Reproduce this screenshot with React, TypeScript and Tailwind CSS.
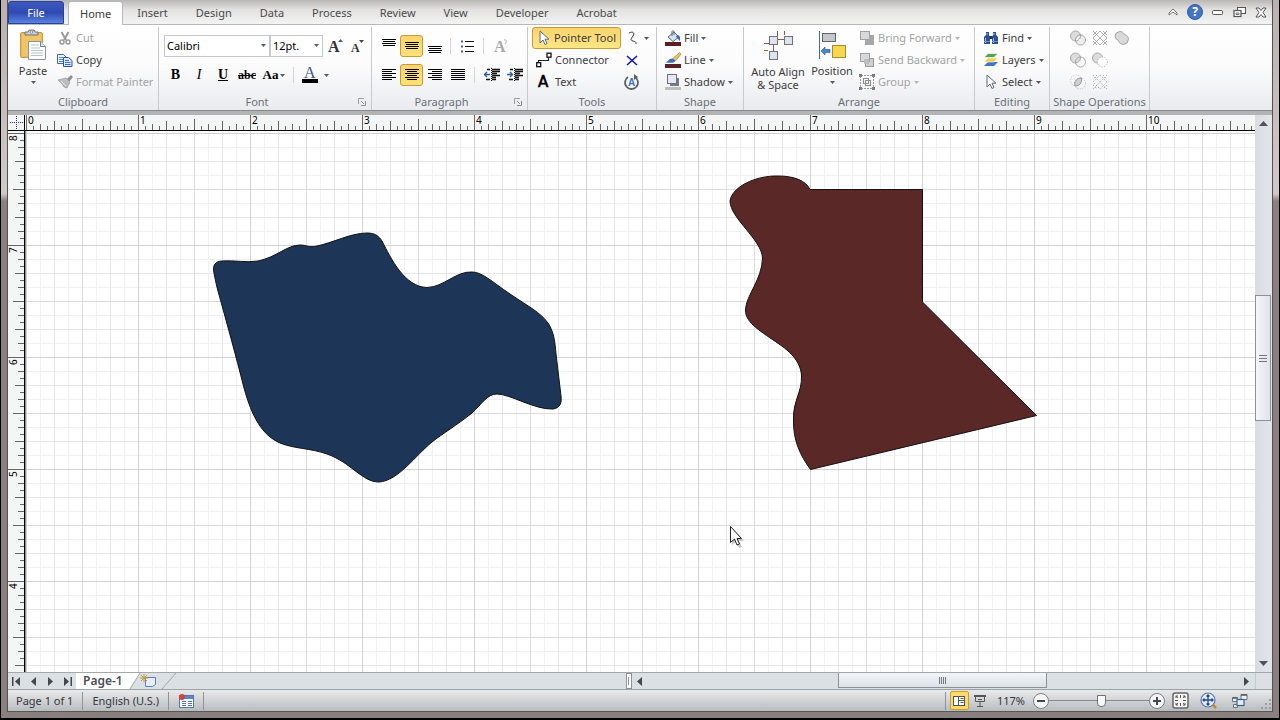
import type { ReactNode } from 'react'

type IconProps = { w?: number; h?: number; className?: string; children: ReactNode }

function Icon({ w = 16, h = 16, className = '', children }: IconProps) {
  return (
    <svg width={w} height={h} viewBox={`0 0 ${w} ${h}`} fill="none" className={`shrink-0 overflow-visible ${className}`} aria-hidden="true">
      {children}
    </svg>
  )
}

function Caret({ className = 'text-[#555b62]' }: { className?: string }) {
  return (
    <Icon w={5} h={3} className={className}>
      <path d="M0 0h5L2.5 3z" fill="currentColor" />
    </Icon>
  )
}

function Separator() {
  return <div className="h-[16px] w-px bg-[#d3d5d8]" />
}

type GroupProps = { title: string; launcher?: boolean; className?: string; children: ReactNode }

function Group({ title, launcher, className = '', children }: GroupProps) {
  return (
    <section aria-label={title} className={`flex shrink-0 flex-col border-r border-[#c6cacf] ${className}`}>
      <div className="h-[66px]">{children}</div>
      <div className="flex h-[17px] items-center">
        <span className="flex-1 text-center whitespace-nowrap text-[#6a6f76]">{title}</span>
        {launcher && (
          <button aria-label={`${title} settings`} className="mr-[2px] flex w-[14px] justify-center">
            <Icon w={8} h={8}>
              <path d="M.5 6V.5H6" stroke="#9a9ea3" />
              <path d="M3 3l3 3M7.5 3v4.5H3" stroke="#8a8e93" />
            </Icon>
          </button>
        )}
      </div>
    </section>
  )
}

type ToolButtonProps = { icon: ReactNode; label: string; caret?: boolean; disabled?: boolean }

function ToolButton({ icon, label, caret, disabled }: ToolButtonProps) {
  return (
    <button disabled={disabled} className="flex h-[22px] items-center gap-[3px] whitespace-nowrap text-[#3b3b3b] disabled:text-[#a3a3a3]">
      <span className="flex w-[17px] justify-center">{icon}</span>
      <span>{label}</span>
      {caret && <Caret className={disabled ? 'text-[#b5b5b5]' : 'text-[#555b62]'} />}
    </button>
  )
}

function IconButton({ label, active, children }: { label: string; active?: boolean; children: ReactNode }) {
  return (
    <button
      aria-label={label}
      className={`flex h-[22px] w-[23px] items-center justify-center ${active ? 'rounded-[3px] border border-[#c79a3a] bg-linear-to-b from-[#fbd36d] to-[#fee278]' : ''}`}
    >
      {children}
    </button>
  )
}

/* ---------- icons ---------- */

function PasteIcon() {
  return (
    <Icon w={28} h={32}>
      <rect x="1.5" y="3.5" width="22" height="25" rx="1.5" fill="#eab956" stroke="#c99a45" />
      <path d="M3 5h19v22H3z" fill="#f0c566" />
      <path d="M6 3h3l1-2h5l1 2h3v3H6z" fill="#c9ccd0" stroke="#6f757b" />
      <circle cx="12.5" cy="3" r="1.2" fill="#fff" stroke="#6f757b" strokeWidth=".7" />
      <path d="M9.5 12.5h12l5 5v13h-17z" fill="#fff" stroke="#8b97a8" />
      <path d="M21.5 12.5v5h5" fill="#dbe4f0" stroke="#6d7f9b" />
      <path d="M12 16h8M12 19h9M12 21.5h12M12 24h12M12 26.5h12" stroke="#b7c0cf" />
    </Icon>
  )
}

function CutIcon() {
  return (
    <Icon>
      <path d="M4.5 2l4.5 8M11.5 2L7 10" stroke="#9a9a9a" strokeWidth="2" />
      <circle cx="5" cy="12" r="2" stroke="#9a9a9a" strokeWidth="1.5" />
      <circle cx="11" cy="12" r="2" stroke="#9a9a9a" strokeWidth="1.5" />
    </Icon>
  )
}

function CopyIcon() {
  return (
    <Icon>
      <path d="M.5 2.5h6l3 3v6h-9z" fill="#e8f0fb" stroke="#3d68ae" />
      <path d="M2 5.5h4M2 7.5h4M2 9.5h4" stroke="#5c86c8" />
      <path d="M6.5 5.5h5l3.5 3v6H6.5z" fill="#dbe8fa" stroke="#2c55a0" />
      <path d="M8 8.5h4M8 10.5h5.5M8 12.5h5.5" stroke="#4370bd" />
    </Icon>
  )
}

function PainterIcon() {
  return (
    <Icon>
      <path d="M10 5l4-4 2 2-4 5z" fill="#8f8f8f" />
      <path d="M1 6l8-2 4 4-3 6-3-1-2-3z" fill="#bdbdbd" stroke="#999" strokeWidth=".7" />
      <path d="M4 7l5 5" stroke="#e6e6e6" />
    </Icon>
  )
}

function ArrowCursor() {
  return (
    <Icon w={12} h={16}>
      <path d="M2 1v12l3-3 2 4.5 2-1-2-4.3h4z" fill="#fff" stroke="#5a6b8c" />
    </Icon>
  )
}

function ConnectorIcon() {
  return (
    <Icon>
      <path d="M2.5 10V8.5h10V6" stroke="#222" strokeWidth="1.2" />
      <rect x=".7" y="10.7" width="4" height="4" fill="#fff" stroke="#111" strokeWidth="1.3" />
      <rect x="11" y="1.2" width="4" height="4" fill="#fff" stroke="#111" strokeWidth="1.3" />
    </Icon>
  )
}

function LinesIcon({ rows }: { rows: [number, number, number][] }) {
  return (
    <Icon>
      {rows.map(([y, x1, x2]) => (
        <path key={y} d={`M${x1} ${y + 0.5}H${x2}`} stroke="#000" />
      ))}
    </Icon>
  )
}

function BulletsIcon() {
  return (
    <Icon>
      <path d="M6 3.5h9M6 8.5h9M6 13.5h9" stroke="#111" />
      <path d="M2 3.5h2M2 8.5h2M2 13.5h2" stroke="#4a5aa0" strokeWidth="2" />
    </Icon>
  )
}

function IndentIcon({ increase }: { increase?: boolean }) {
  return (
    <Icon>
      <path d="M8 2.5h8M8 4.5h8M8 6.5h5M8 8.5h8M8 10.5h4M3 2.5h3M2 12.5h4M8 12.5h4" stroke="#111" strokeWidth="1.3" />
      <path d="M7.5 1v14" stroke="#111" strokeDasharray="1 1" />
      <path d={increase ? 'M0 7.5h5M3 5l2.5 2.5L3 10' : 'M6 7.5H1M3 5L.5 7.5 3 10'} stroke="#2e5f9e" strokeWidth="1.4" />
    </Icon>
  )
}

function FillIcon() {
  return (
    <Icon>
      <path d="M3 7l6-5 5 5-6 4.5z" fill="#d7e2ef" stroke="#5a6b80" />
      <path d="M7 6V1.500c0-1 2-1 2 0V5" stroke="#5a6b80" />
      <path d="M12 5c3 0 3.500 3 3 6-1.500-1-2-3-4-4z" fill="#3569b8" />
      <path d="M0 12h16v4H0z" fill="#5b1f21" />
    </Icon>
  )
}

function LineIcon() {
  return (
    <Icon>
      <path d="M8 6.5L14.5.5 16 2l-5.500 7z" fill="#eac25a" stroke="#a8843a" strokeWidth=".7" />
      <path d="M0 10c4 0 3-4 8-3.500L10.500 9C9 11 5 11.500 0 10z" fill="#3c6fc0" />
      <path d="M0 12h16v4H0z" fill="#5b1f21" />
    </Icon>
  )
}

function ShadowIcon() {
  return (
    <Icon>
      <path d="M5 4h9v8H5z" fill="#777a85" />
      <rect x="2.5" y=".5" width="9" height="9" fill="#e6e8f4" stroke="#6b6f82" />
      <path d="M0 13h16v3H0z" fill="#bdbdbd" />
    </Icon>
  )
}

function Box({ x, y }: { x: number; y: number }) {
  return <rect x={x + 0.5} y={y + 0.5} width="8" height="8" fill="#dfe3ef" stroke="#6b7280" />
}

function AutoAlignIcon() {
  return (
    <Icon w={30} h={32}>
      <path d="M14.500 2v5M21.500 2v4M1 14.500h6M1 21.500h4M10.500 14v8M14 10.500h7" stroke="#a8553e" />
      <Box x={6} y={7} />
      <Box x={21} y={7} />
      <Box x={6} y={22} />
    </Icon>
  )
}

function PositionIcon() {
  return (
    <Icon w={30} h={32}>
      <path d="M2.5 2v28" stroke="#3b6aa8" />
      <rect x="5.5" y="4.5" width="13" height="8" fill="#c4c7cc" stroke="#5f646b" />
      <rect x="15.5" y="16.5" width="13" height="12" fill="#f8d64e" stroke="#a88a2a" />
      <path d="M13 20.5H8v-2.500l-4 4 4 4v-2.500h5z" fill="#4a86cf" stroke="#2f62a8" strokeWidth=".7" />
    </Icon>
  )
}

function StackIcon({ back }: { back?: boolean }) {
  return (
    <Icon>
      {back && <rect x="6.5" y="6.5" width="8" height="8" fill="#cfcfcf" stroke="#9b9b9b" />}
      <rect x="1.5" y="1.5" width="9" height="8" fill="#d8d8d8" stroke="#a0a0a0" />
      {back && <path d="M5 7h5v5H5z" fill="#bdbdbd" />}
      {!back && <path d="M10 5h5v10H6v-5h4z" fill="#a7a7a7" />}
    </Icon>
  )
}

function GroupIcon() {
  return (
    <Icon>
      <path d="M2 1.500h12M2 14.500h12M1.500 2v12M14.500 2v12" stroke="#9a9a9a" strokeDasharray="2 1" />
      <rect x="4.5" y="4.5" width="5" height="5" stroke="#8c8c8c" />
      <rect x="6.5" y="6.5" width="5" height="5" stroke="#8c8c8c" />
      <path d="M0 0h3v3H0zM13 0h3v3h-3zM0 13h3v3H0zM13 13h3v3h-3z" fill="#7d7d7d" />
    </Icon>
  )
}

function FindIcon() {
  return (
    <Icon>
      <path d="M3 2h3v3l1 2v7H1V7l2-2zM10 2h3v3l2 2v7H9V7l1-2z" fill="#2f4f95" />
      <path d="M6.5 6h3v3h-3z" fill="#1d3263" />
      <path d="M2.5 8v5M10.5 8v5M4 3v2M11 3v2" stroke="#a9bfe6" />
      <path d="M1 11.500h6M9 11.500h6" stroke="#6f8dcb" />
    </Icon>
  )
}

function LayersIcon() {
  return (
    <Icon>
      <path d="M5 10h10l-4 4H1z" fill="#3f74c9" />
      <path d="M5 6h10l-4 4H1z" fill="#f1cf52" stroke="#fff" strokeWidth=".6" />
      <path d="M5 1.500h10l-4 4H1z" fill="#55a553" stroke="#fff" strokeWidth=".6" />
    </Icon>
  )
}

function TwoCircles({ front, lens, dashed }: { front?: string; lens?: boolean; dashed?: boolean }) {
  return (
    <Icon>
      <circle cx="5.5" cy="6" r="5" fill="#dcdcdc" stroke="#a9a9a9" />
      <circle cx="10.5" cy="10" r="5" fill={front} stroke="#a9a9a9" strokeDasharray={dashed ? '1 1.500' : undefined} />
      {lens && <path d="M5.5 11c-.5-3 2-6 5-6 .5 3-2 6-5 6z" fill="#f2f2f2" stroke="#a0a0a0" />}
    </Icon>
  )
}

function UnionIcon() {
  return (
    <Icon>
      <path d="M1 6a5 5 0 019.500-1.500 5 5 0 11-6 6A5 5 0 011 6z" fill="#d9d9d9" stroke="#a4a4a4" />
    </Icon>
  )
}

function IntersectIcon() {
  return (
    <Icon>
      <circle cx="6" cy="6.5" r="5.5" stroke="#b5b5b5" strokeDasharray="1 1.500" />
      <circle cx="10" cy="9.5" r="5.5" stroke="#b5b5b5" strokeDasharray="1 1.500" />
      <path d="M5 12c-1-5 2-8 6.500-8 .5 5-2 8-6.500 8z" fill="#d0d0d0" stroke="#999" />
    </Icon>
  )
}

function TrimIcon({ dashed }: { dashed?: boolean }) {
  return (
    <Icon>
      <path
        d="M1 1l14 14M15 1L1 15M8 1l7 7-7 7-7-7zM5 1L1 5M11 1l4 4M1 11l4 4M15 11l-4 4"
        stroke="#9a9a9a"
        strokeWidth=".8"
        strokeDasharray={dashed ? '1.5 1.5' : undefined}
      />
    </Icon>
  )
}

/* ---------- title strip ---------- */

const tabs = ['Insert', 'Design', 'Data', 'Process', 'Review', 'View', 'Developer', 'Acrobat']

function TabStrip() {
  return (
    <header className="flex h-[25px] shrink-0 items-end border-b border-[#b5b9be] bg-linear-to-b from-[#b9b7b6] via-[#e3e2e1] via-40% to-[#f3f3f3]">
      <button className="mr-1 h-[23px] w-[56px] rounded-t-[3px] border border-[#2c3f99] bg-linear-to-b from-[#3e5abf] via-[#2f49b0] to-[#5a82e0] text-white">
        File
      </button>
      <nav className="flex">
        <button className="-mb-px h-[24px] rounded-t-[3px] border border-b-0 border-[#b5b9be] bg-white px-[11px] text-[#3b3b3b]">Home</button>
        {tabs.map((tab) => (
          <button key={tab} className="h-[23px] px-[14px] text-[#4a4a4a]">
            {tab}
          </button>
        ))}
      </nav>
      <div className="ml-auto flex h-[24px] items-center">
        <button aria-label="Minimize the ribbon" className="flex w-[22px] justify-center">
          <Icon w={10} h={8}>
            <path d="M1 5l4-4 4 4v2L5 4 1 7z" fill="#fff" stroke="#666" strokeWidth=".9" />
          </Icon>
        </button>
        <button aria-label="Help" className="flex w-[22px] justify-center">
          <span className="flex size-[16px] items-center justify-center rounded-full border border-[#2f5aa5] bg-[#4674c4] text-[12px] leading-[14px] font-bold text-white">
            ?
          </span>
        </button>
        <button aria-label="Minimize" className="flex w-[22px] justify-center">
          <Icon w={11} h={5}>
            <rect x=".5" y=".5" width="10" height="4" rx="1" fill="#fff" stroke="#555" />
          </Icon>
        </button>
        <button aria-label="Restore" className="flex w-[22px] justify-center">
          <Icon w={13} h={12}>
            <rect x="4.5" y="1.5" width="8" height="6" fill="#fff" stroke="#555" />
            <rect x="1" y="4.5" width="7" height="6" fill="#fff" stroke="#555" strokeWidth="1.2" />
            <path d="M3 7h3v1.500H3z" fill="#fff" stroke="#555" strokeWidth=".8" />
          </Icon>
        </button>
        <button aria-label="Close" className="flex w-[22px] justify-center">
          <Icon w={12} h={11}>
            <path d="M1 1h3l2 2.5L8 1h3L8 5.5 11 10H8L6 7.5 4 10H1l3-4.500z" fill="#fff" stroke="#555" />
          </Icon>
        </button>
      </div>
    </header>
  )
}

/* ---------- ribbon ---------- */

const alignTop: [number, number, number][] = [[1, 1, 15], [3, 2, 14], [5, 1, 15], [7, 2, 14]]
const alignMiddle: [number, number, number][] = [[4, 1, 15], [6, 2, 14], [8, 1, 15], [10, 2, 14]]
const alignBottom: [number, number, number][] = [[8, 1, 15], [10, 2, 14], [12, 1, 15], [14, 2, 14]]
const alignLeft: [number, number, number][] = [[2, 1, 15], [4, 1, 11], [6, 1, 15], [8, 1, 11], [10, 1, 15], [12, 1, 11]]
const alignCenter: [number, number, number][] = [[2, 1, 15], [4, 3, 13], [6, 1, 15], [8, 3, 13], [10, 1, 15], [12, 3, 13]]
const alignRight: [number, number, number][] = [[2, 1, 15], [4, 5, 15], [6, 1, 15], [8, 5, 15], [10, 1, 15], [12, 5, 15]]
const justify: [number, number, number][] = [[2, 1, 15], [4, 1, 15], [6, 1, 15], [8, 1, 15], [10, 1, 15], [12, 1, 15]]

function Combo({ label, value, className }: { label: string; value: string; className: string }) {
  return (
    <div className={`relative h-[22px] ${className}`}>
      <select aria-label={label} className="size-full appearance-none border border-[#c5c9ce] bg-white pl-[2px] text-black">
        <option>{value}</option>
      </select>
      <span className="pointer-events-none absolute top-[9px] right-[4px]">
        <Caret />
      </span>
    </div>
  )
}

function Ribbon() {
  return (
    <div className="flex h-[86px] shrink-0 overflow-hidden border-b border-[#85898e] bg-linear-to-b from-white via-[#fbfbfc] via-50% to-[#e9ebee] pt-[2px]">
      <Group title="Clipboard" className="w-[151px]">
        <div className="flex pl-[8px]">
          <button className="flex w-[34px] flex-col items-center pt-[2px] text-[#3b3b3b]">
            <PasteIcon />
            <span className="leading-[20px]">Paste</span>
            <Caret />
          </button>
          <div className="ml-[6px]">
            <ToolButton icon={<CutIcon />} label="Cut" disabled />
            <ToolButton icon={<CopyIcon />} label="Copy" />
            <ToolButton icon={<PainterIcon />} label="Format Painter" disabled />
          </div>
        </div>
      </Group>

      <Group title="Font" launcher className="w-[213px]">
        <div className="flex flex-col gap-[7px] pt-[8px] pl-[5px]">
          <div className="flex items-center">
            <Combo label="Font" value="Calibri" className="w-[106px]" />
            <Combo label="Font size" value="12pt." className="w-[53px]" />
            <IconButton label="Grow font">
              <Icon>
                <text x="1" y="14" className="font-['Liberation_Serif'] text-[16px] font-bold" fill="#333">A</text>
                <path d="M11 4h5l-2.500-3z" fill="#4a5aa0" />
              </Icon>
            </IconButton>
            <IconButton label="Shrink font">
              <Icon>
                <text x="1" y="14" className="font-['Liberation_Serif'] text-[12px] font-bold" fill="#333">A</text>
                <path d="M9 2h5l-2.500 3z" fill="#444" />
              </Icon>
            </IconButton>
          </div>
          <div className="flex h-[22px] items-center font-['Liberation_Serif'] text-[14px] text-black">
            <button className="w-[23px] font-bold">B</button>
            <button className="w-[24px] italic">I</button>
            <button className="w-[24px] font-bold underline">U</button>
            <button className="w-[24px] text-[12px] font-bold line-through">abc</button>
            <button className="flex w-[30px] items-center justify-center gap-[2px] text-[13px] font-bold">
              Aa <Caret />
            </button>
            <div className="mx-[4px]">
              <Separator />
            </div>
            <button aria-label="Font color" className="flex w-[34px] items-center justify-center gap-[6px]">
              <Icon>
                <text x="2" y="11" className="font-['Liberation_Serif'] text-[16px]" fill="#3b5182">A</text>
                <path d="M0 12h16v4H0z" fill="#000" />
              </Icon>
              <Caret />
            </button>
          </div>
        </div>
      </Group>

      <Group title="Paragraph" launcher className="w-[156px]">
        <div className="flex flex-col gap-[7px] pt-[8px] pl-[5px]">
          <div className="flex items-center">
            <IconButton label="Align top"><LinesIcon rows={alignTop} /></IconButton>
            <IconButton label="Align middle" active><LinesIcon rows={alignMiddle} /></IconButton>
            <IconButton label="Align bottom"><LinesIcon rows={alignBottom} /></IconButton>
            <div className="mx-[4px]"><Separator /></div>
            <IconButton label="Bullets"><BulletsIcon /></IconButton>
            <div className="mx-[5px]"><Separator /></div>
            <IconButton label="Rotate text">
              <Icon>
                <text x="1" y="14" className="font-['Liberation_Serif'] text-[16px] font-bold" fill="#aaa">A</text>
                <path d="M11 2c3-1 3 2 1 4" stroke="#b5b5b5" />
              </Icon>
            </IconButton>
          </div>
          <div className="flex items-center">
            <IconButton label="Align left"><LinesIcon rows={alignLeft} /></IconButton>
            <IconButton label="Center" active><LinesIcon rows={alignCenter} /></IconButton>
            <IconButton label="Align right"><LinesIcon rows={alignRight} /></IconButton>
            <IconButton label="Justify"><LinesIcon rows={justify} /></IconButton>
            <div className="mx-[5px]"><Separator /></div>
            <IconButton label="Decrease indent"><IndentIcon /></IconButton>
            <IconButton label="Increase indent"><IndentIcon increase /></IconButton>
          </div>
        </div>
      </Group>

      <Group title="Tools" className="w-[129px]">
        <div className="flex pl-[4px]">
          <div className="w-[89px]">
            <button className="flex h-[22px] w-full items-center gap-[2px] rounded-[3px] border border-[#c79a3a] bg-linear-to-b from-[#fbd36d] to-[#fee685] pl-[2px] whitespace-nowrap text-[#3b3b3b]">
              <span className="flex w-[17px] justify-center"><ArrowCursor /></span>
              Pointer Tool
            </button>
            <div className="pl-[3px]">
              <ToolButton icon={<ConnectorIcon />} label="Connector" />
              <ToolButton
                icon={
                  <Icon>
                    <text x="2" y="13" className="font-['DejaVu_Sans'] text-[15px]" fill="#000" stroke="#000" strokeWidth=".6">A</text>
                  </Icon>
                }
                label="Text"
              />
            </div>
          </div>
          <div className="ml-[3px] flex flex-col">
            <button aria-label="Freeform" className="flex h-[22px] items-center gap-[4px]">
              <Icon>
                <path d="M5 3c4-2 6 0 4 3s-3 4 0 5 3 1 3 3" stroke="#333" />
              </Icon>
              <Caret />
            </button>
            <button aria-label="Connection point" className="flex h-[22px] items-center">
              <Icon>
                <path d="M3 4l10 9M13 4L3 13" stroke="#1414c8" strokeWidth="1.6" />
              </Icon>
            </button>
            <button aria-label="Text block" className="flex h-[22px] items-center">
              <Icon>
                <path d="M4 3a6.500 6.500 0 107 0" stroke="#5a6068" strokeWidth="1.8" />
                <path d="M10 0l4 3-4 3z" fill="#5a6068" />
                <text x="4" y="12" className="font-['Liberation_Sans'] text-[10px] font-bold" fill="#3f71b5">A</text>
              </Icon>
            </button>
          </div>
        </div>
      </Group>

      <Group title="Shape" className="w-[87px]">
        <div className="pl-[7px]">
          <ToolButton icon={<FillIcon />} label="Fill" caret />
          <ToolButton icon={<LineIcon />} label="Line" caret />
          <ToolButton icon={<ShadowIcon />} label="Shadow" caret />
        </div>
      </Group>

      <Group title="Arrange" className="w-[231px]">
        <div className="flex pl-[4px] text-[#3b3b3b]">
          <button className="flex w-[60px] flex-col items-center pt-[2px] leading-[13px] whitespace-nowrap">
            <AutoAlignIcon />
            <span className="pt-[4px]">Auto Align</span>
            <span>&amp; Space</span>
          </button>
          <button className="flex w-[48px] flex-col items-center pt-[2px]">
            <PositionIcon />
            <span className="leading-[20px]">Position</span>
            <Caret />
          </button>
          <div className="ml-[2px]">
            <ToolButton icon={<StackIcon />} label="Bring Forward" caret disabled />
            <ToolButton icon={<StackIcon back />} label="Send Backward" caret disabled />
            <ToolButton icon={<GroupIcon />} label="Group" caret disabled />
          </div>
        </div>
      </Group>

      <Group title="Editing" className="w-[75px]">
        <div className="pl-[7px]">
          <ToolButton icon={<FindIcon />} label="Find" caret />
          <ToolButton icon={<LayersIcon />} label="Layers" caret />
          <ToolButton icon={<ArrowCursor />} label="Select" caret />
        </div>
      </Group>

      <Group title="Shape Operations" className="w-[100px]">
        <div className="grid grid-cols-[repeat(3,22px)] grid-rows-[repeat(3,22px)] place-items-center pl-[17px]">
          <button aria-label="Union"><TwoCircles front="#ededed" lens /></button>
          <button aria-label="Trim"><TrimIcon /></button>
          <button aria-label="Join"><UnionIcon /></button>
          <button aria-label="Combine"><TwoCircles /></button>
          <button aria-label="Subtract"><TwoCircles front="#fff" dashed /></button>
          <span />
          <button aria-label="Intersect"><IntersectIcon /></button>
          <button aria-label="Offset"><TrimIcon dashed /></button>
        </div>
      </Group>
    </div>
  )
}

/* ---------- drawing area ---------- */

const INCH = 112

// tick length in sixteenths of an inch
function tickLength(i: number) {
  if (i === 0) return 16
  if (i === 8) return 11
  if (i % 4 === 0) return 9
  return i % 2 === 0 ? 6 : 4
}

const ticks = Array.from({ length: 16 }, (_, i) => i)

function HorizontalRuler() {
  return (
    <svg className="h-[16px] w-full min-w-0 flex-1 overflow-visible border-b border-black bg-[#f4f5f5]" aria-hidden="true">
      <defs>
        <pattern id="h-ticks" x="1" width={INCH} height="16" patternUnits="userSpaceOnUse">
          {ticks.map((i) => (
            <rect key={i} x={i * 7} y={15 - tickLength(i)} width="1" height={tickLength(i)} fill="#666" />
          ))}
        </pattern>
      </defs>
      <rect width="100%" height="15" fill="url(#h-ticks)" />
      {Array.from({ length: 11 }, (_, n) => (
        <text key={n} x={n * INCH + 3} y="9" className="text-[10px]" fill="#000">
          {n}
        </text>
      ))}
    </svg>
  )
}

function VerticalRuler() {
  return (
    <svg className="h-full w-[17px] shrink-0 overflow-visible border-r border-black bg-[#f4f5f5]" aria-hidden="true">
      <defs>
        <pattern id="v-ticks" y="2" width="16" height={INCH} patternUnits="userSpaceOnUse">
          {ticks.map((i) => (
            <rect key={i} x={16 - tickLength(i)} y={i * 7} width={tickLength(i)} height="1" fill="#666" />
          ))}
        </pattern>
      </defs>
      <rect width="16" height="100%" fill="url(#v-ticks)" />
      {[8, 7, 6, 5, 4].map((n, i) => (
        <text key={n} transform={`translate(9 ${i * INCH + 10}) rotate(-90)`} className="text-[10px]" fill="#000">
          {n}
        </text>
      ))}
    </svg>
  )
}

function GridLines({ id, step, color }: { id: string; step: number; color: string }) {
  return (
    <>
      <defs>
        <pattern id={id} x="0" y="2" width={step} height={step} patternUnits="userSpaceOnUse">
          <path d={`M.5 0v${step}M0 .5h${step}`} stroke={color} />
        </pattern>
      </defs>
      <rect width="100%" height="100%" fill={`url(#${id})`} />
    </>
  )
}

function Canvas() {
  return (
    <svg className="h-full min-w-0 flex-1 bg-white" role="img" aria-label="Page-1 drawing">
      <GridLines id="grid-eighth" step={14} color="#f1f1f1" />
      <GridLines id="grid-quarter" step={28} color="#e8e8e8" />
      <GridLines id="grid-half" step={56} color="#dcdcdc" />
      <GridLines id="grid-inch" step={INCH} color="#d2d2d2" />
      <g transform="translate(-26 -131)" stroke="#111">
        <path
          fill="#1d3557"
          d="M214 273C212 265 216 261 222 261C235 260 246 263 258 261C277 257 287 245 300 245C307 245 309 248 317 246C332 243 351 233 367 233C374 233 378 235 382 241C391 259 405 287 427 287.500C444 287 456 271 472 272C482 272 491 281 510 294C529 307 540 312 548 323C554 332 555 342 556 354L561 396C562 403 560 408 553 409C535 410 510 394 497 394C487 394 482 404 472 413C457 425 442 434 432 442C416 455 398 481 379 482C362 482 352 463 327 454C310 448 295 449 280 443C262 435 252 417 244 388C236 356 226 320 218 291C216 284 215 278 214 273Z"
        />
        <path
          fill="#5a2826"
          d="M810 189.500H922.500V302L1036.500 415.500L810.500 469.500C800 455 793 440 793.500 420C793 400 802 393 801.500 376C801 365 795 355 779 344C762 332 745 323 745.500 310C746 295 762 280 762.500 258C762 240 730 218 730 201C732 187 755 175.500 778 176C795 176 806 181 810 189.500Z"
        />
      </g>
      <g transform="translate(704 395)">
        <path d="M2 3v16l4-3 3 6 3-1-3-6h5z" fill="#000" opacity=".2" />
        <path d="M.5.5v16l4-3.500 2.500 6 2.500-1-2.500-5.500h4.500z" fill="#fff" stroke="#222" />
      </g>
    </svg>
  )
}

function VerticalScrollbar() {
  return (
    <div className="flex w-[17px] shrink-0 flex-col items-center bg-linear-to-r from-[#d9dde1] to-[#e2e6ea]">
      <button aria-label="Scroll up" className="flex h-[16px] items-center">
        <Icon w={9} h={5}><path d="M0 5h9L4.500 0z" fill="#4d5257" /></Icon>
      </button>
      <div className="flex-[165]" />
      <div className="flex w-[16px] flex-[124] flex-col items-center justify-center gap-[2px] self-start border border-[#8c9196] bg-linear-to-r from-[#f5f7f9] to-[#dfe4e9]">
        <div className="h-px w-[8px] bg-[#70767c]" />
        <div className="h-px w-[8px] bg-[#70767c]" />
        <div className="h-px w-[8px] bg-[#70767c]" />
      </div>
      <div className="flex-[235]" />
      <button aria-label="Scroll down" className="flex h-[17px] items-center">
        <Icon w={9} h={5}><path d="M0 0h9L4.500 5z" fill="#4d5257" /></Icon>
      </button>
    </div>
  )
}

function DrawingArea() {
  return (
    <main className="flex min-h-0 flex-1 border-t-4 border-[#b1b3b5]">
      <div className="flex min-w-0 flex-1 flex-col">
        <div className="flex h-[16px] shrink-0">
          <div className="h-[16px] w-[17px] shrink-0 border-r border-b border-black bg-[#f4f5f5]">
            <Icon w={16} h={15}>
              <path d="M8.5 1v13M2 7.500h13" stroke="#2a2aa8" strokeDasharray="1 1" />
            </Icon>
          </div>
          <HorizontalRuler />
        </div>
        <div className="flex min-h-0 flex-1">
          <VerticalRuler />
          <div className="w-px shrink-0 bg-[#8f8f8f]" />
          <Canvas />
        </div>
      </div>
      <VerticalScrollbar />
    </main>
  )
}

/* ---------- bottom bars ---------- */

function PageNav({ label, d }: { label: string; d: string }) {
  return (
    <button aria-label={label} className="flex w-[17px] justify-center">
      <Icon w={9} h={9}><path d={d} fill="#43484e" /></Icon>
    </button>
  )
}

function PageTabs() {
  return (
    <div className="flex h-[17px] shrink-0 border-t border-[#a3a8ad] bg-[#dbe0e5]">
      <div className="flex flex-1 items-center">
        <PageNav label="First page" d="M0 0h1.500v9H0zM8 0v9L3 4.500z" />
        <PageNav label="Previous page" d="M7 0v9L2 4.500z" />
        <PageNav label="Next page" d="M2 0v9l5-4.500z" />
        <PageNav label="Last page" d="M1 0v9l5-4.500zM7.500 0H9v9H7.500z" />
        <button className="h-[16px] bg-white px-[7px] text-[12px] leading-[16px] font-semibold text-[#4a4e55]">Page-1</button>
        <button aria-label="Insert page" className="flex h-[16px] items-center">
          <Icon w={48} h={16}>
            <path d="M0 0h10L0 15z" fill="#fff" />
            <path d="M10 0L0 16M46 0L32 16" stroke="#a3a8ad" />
            <path d="M15.500 4.500h10v7l-3 2h-7z" fill="#e6edf8" stroke="#5c7db5" />
            <path d="M14 1v8M10 5h8M11 2l6 6M17 2l-6 6" stroke="#c59a35" />
          </Icon>
        </button>
        <div className="ml-auto flex h-[16px] w-[6px] justify-center border border-[#8c9196] bg-white py-[3px]">
          <div className="w-px bg-[#8c9196]" />
        </div>
      </div>
      <div className="flex flex-1 items-center">
        <button aria-label="Scroll left" className="flex w-[16px] justify-center">
          <Icon w={5} h={9}><path d="M5 0v9L0 4.500z" fill="#43484e" /></Icon>
        </button>
        <div className="flex-[191]" />
        <div className="flex h-[15px] flex-[208] items-center justify-center gap-[1px] self-start border border-t-0 border-[#8c9196] bg-linear-to-b from-[#f2f5f8] to-[#dde2e8]">
          <div className="h-[7px] w-px bg-[#70767c]" />
          <div className="h-[7px] w-px bg-[#70767c]" />
          <div className="h-[7px] w-px bg-[#70767c]" />
          <div className="h-[7px] w-px bg-[#70767c]" />
        </div>
        <div className="flex-[192]" />
        <button aria-label="Scroll right" className="flex w-[17px] justify-center">
          <Icon w={5} h={9}><path d="M0 0v9l5-4.500z" fill="#43484e" /></Icon>
        </button>
      </div>
      <div className="w-[17px] border-l border-[#c5cad0]" />
    </div>
  )
}

function RoundButton({ label, d }: { label: string; d: string }) {
  return (
    <button aria-label={label} className="flex size-[16px] items-center justify-center rounded-full border border-[#7b7f84] bg-[#f4f5f6]">
      <Icon w={8} h={8}><path d={d} stroke="#44484d" strokeWidth="2" /></Icon>
    </button>
  )
}

function StatusBar() {
  return (
    <footer className="flex h-[23px] shrink-0 items-center border-y border-t-[#9ea2a6] border-b-[#55585b] bg-linear-to-b from-[#e9eaeb] to-[#b9bcbf] pl-[8px] whitespace-nowrap text-[#33373c]">
      <span className="mr-[9px]">Page 1 of 1</span>
      <div className="h-[18px] w-px bg-[#8f9397]" />
      <span className="mx-[9px]">English (U.S.)</span>
      <div className="h-[18px] w-px bg-[#8f9397]" />
      <button aria-label="Macro recording" className="mx-[9px]">
        <Icon>
          <rect x="1.5" y="2.5" width="14" height="12" fill="#fff" stroke="#5876a8" />
          <path d="M2 3h13v3H2z" fill="#5a86cc" />
          <path d="M4 8.500h4M10 8.500h4M4 10.500h4M10 10.500h4M4 12.500h4M10 12.500h4" stroke="#4f79bd" />
          <circle cx="4" cy="4" r="3" fill="#c8483f" />
        </Icon>
      </button>
      <div className="h-[18px] w-px bg-[#8f9397]" />

      <div className="ml-auto flex items-center">
        <div className="mr-[4px] h-[18px] w-px bg-[#8f9397]" />
        <button aria-label="Normal view" className="flex size-[19px] items-center justify-center rounded-[2px] border border-[#c79a3a] bg-[#fddb68]">
          <Icon w={12} h={10}>
            <rect x=".5" y=".5" width="11" height="9" fill="#fff" stroke="#555" />
            <path d="M5.500 0v10M6 4.500h5M7.500 2.500h3M7.500 6.500h3" stroke="#555" />
          </Icon>
        </button>
        <button aria-label="Full screen" className="mx-[5px]">
          <Icon w={12} h={12}>
            <path d="M0 1h12" stroke="#555" strokeWidth="2" />
            <path d="M1.500 2v4.500h9V2M6 7v4M3 11.500h6M4 4.500h4" stroke="#555" />
          </Icon>
        </button>
        <button className="mr-[8px] ml-[6px]">117%</button>
        <RoundButton label="Zoom out" d="M0 4h8" />
        <input
          type="range"
          aria-label="Zoom"
          min="0"
          max="100"
          defaultValue="53"
          className="h-[14px] w-[100px] appearance-none bg-[linear-gradient(#85898d,#85898d)] bg-size-[100%_1px] bg-center bg-no-repeat [&::-webkit-slider-thumb]:h-[12px] [&::-webkit-slider-thumb]:w-[9px] [&::-webkit-slider-thumb]:appearance-none [&::-webkit-slider-thumb]:rounded-b-[4px] [&::-webkit-slider-thumb]:border [&::-webkit-slider-thumb]:border-[#6e7276] [&::-webkit-slider-thumb]:bg-[#f7f8f8]"
        />
        <RoundButton label="Zoom in" d="M0 4h8M4 0v8" />
        <button aria-label="Fit page" className="ml-[7px]">
          <Icon w={17} h={17}>
            <rect x="1" y="1" width="15" height="15" rx="2" fill="#f6f6f6" stroke="#666" strokeWidth="1.500" />
            <path d="M4 6V4h2M11 4h2v2M13 11v2h-2M6 13H4v-2M4 4l2 2M13 4l-2 2M4 13l2-2M13 13l-2-2M8.500 3v3M8.500 11v3M3 8.500h3M11 8.500h3" stroke="#555" />
          </Icon>
        </button>
        <button aria-label="Pan and zoom" className="ml-[11px]">
          <Icon w={17} h={17}>
            <circle cx="8" cy="8" r="7" fill="#e3ecf9" stroke="#5c77a8" strokeWidth="1.200" />
            <path d="M8 3v10M3 8h10M6.500 4.500L8 3l1.500 1.500M6.500 11.500L8 13l1.500-1.500M4.500 6.500L3 8l1.500 1.500M11.500 6.500L13 8l-1.500 1.500" stroke="#24478f" strokeWidth="1.300" />
            <path d="M13 13l3 3" stroke="#c08a2e" strokeWidth="2.500" />
          </Icon>
        </button>
        <button aria-label="Switch windows" className="ml-[15px]">
          <Icon>
            <path d="M9 1.500h6v5H9zM.5 4.500h5v4h-5zM1.500 11.500h4v3h-4z" fill="#eef1f5" stroke="#6b7178" />
            <path d="M9 2h6M1 5h4" stroke="#555" strokeWidth="1.500" />
            <rect x="5" y="6.5" width="7" height="6" fill="#dff0fa" stroke="#35668f" strokeWidth="1.200" />
          </Icon>
        </button>
        <Icon w={12} h={12} className="ml-[12px] self-end">
          <path d="M9 1h2v2H9zM5 5h2v2H5zM9 5h2v2H9zM1 9h2v2H1zM5 9h2v2H5zM9 9h2v2H9z" fill="#9a9ea2" />
        </Icon>
      </div>
    </footer>
  )
}

export default function App() {
  return (
    <div className="flex h-screen flex-col overflow-hidden border-r border-b-2 border-l border-black bg-black font-['Noto_Sans','Open_Sans',sans-serif] text-[11px] leading-[16px]">
      <div className="flex min-h-0 flex-1 bg-linear-to-b from-[#b9b1af] via-[#cfc9c7] via-27% to-[#8b8080] to-28% px-[6px] pb-[6px]">
        <div className="flex min-w-0 flex-1 flex-col border-x border-[#55504f]">
          <TabStrip />
          <Ribbon />
          <DrawingArea />
          <PageTabs />
          <StatusBar />
        </div>
      </div>
    </div>
  )
}
